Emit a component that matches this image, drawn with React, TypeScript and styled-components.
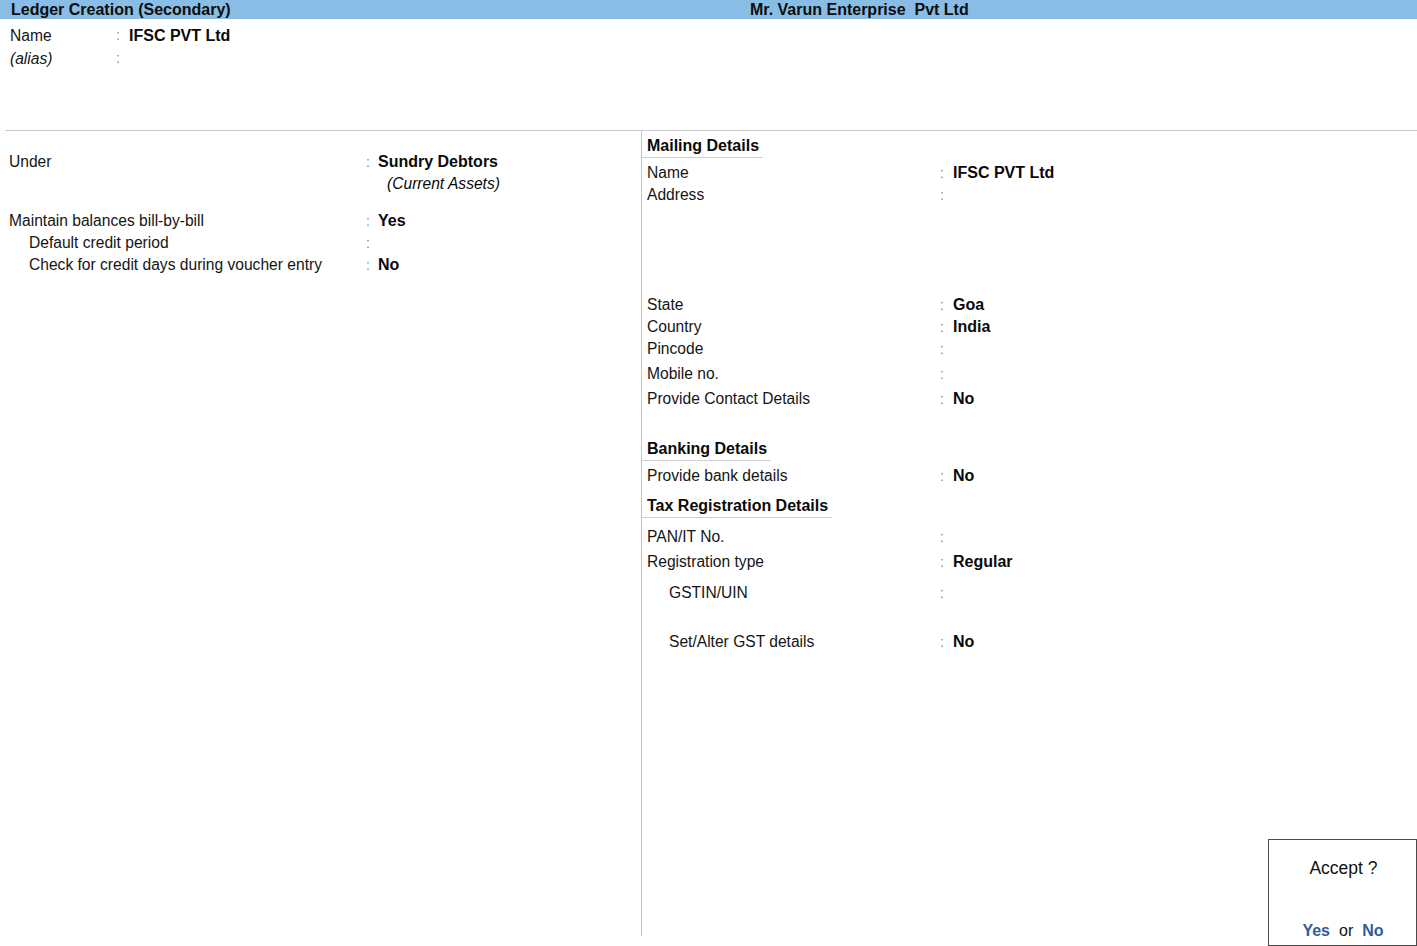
import React from "react";
import styled, { createGlobalStyle } from "styled-components";

const GlobalStyle = createGlobalStyle`
  html, body { margin: 0; padding: 0; background: #ffffff; }
  body { font-family: "Liberation Sans", Arial, sans-serif; color: #111; }
  * { box-sizing: border-box; }
`;

const Page = styled.div`
  position: relative;
  width: 1417px;
  height: 946px;
  overflow: hidden;
  display: flex;
  flex-direction: column;
  background: #fff;
`;

const HeaderBar = styled.div`
  height: 19px;
  background: #89bde5;
  display: grid;
  grid-template-columns: 750px 1fr;
  font-weight: bold;
  font-size: 16px;
  line-height: 19px;
  color: #0d0d0d;
`;

const HeaderTitle = styled.div`
  padding-left: 11px;
`;

const Company = styled.div`
  white-space: pre;
`;

const TopSection = styled.div`
  height: 112px;
  padding-top: 5px;
  border-bottom: 1px solid #c9c9c9;
  margin-left: 5px;
`;

const Body = styled.div`
  display: grid;
  grid-template-columns: 641px 1px 1fr;
  height: 805px;
`;

const Divider = styled.div`
  background: #c4c4c4;
`;

const LeftCol = styled.div`
  padding-top: 20px;
`;

const RightCol = styled.div`
  padding-top: 3px;
  display: flex;
  flex-direction: column;
  align-items: flex-start;
`;

const Row = styled.div<{ $label: number; $colon: number; $h?: number; $mt?: number; $pl: number }>`
  display: grid;
  grid-template-columns: ${(p) => p.$label}px ${(p) => p.$colon}px auto;
  height: ${(p) => p.$h ?? 22}px;
  line-height: ${(p) => p.$h ?? 22}px;
  margin-top: ${(p) => p.$mt ?? 0}px;
  padding-left: ${(p) => p.$pl}px;
  font-size: 15.6px;
  white-space: nowrap;
  align-self: stretch;
`;

const Label = styled.div<{ $indent?: number; $italic?: boolean }>`
  padding-left: ${(p) => p.$indent ?? 0}px;
  font-style: ${(p) => (p.$italic ? "italic" : "normal")};
  color: #151515;
`;

const Colon = styled.div`
  color: #8c8c8c;
  font-size: 14px;
`;

const Value = styled.div<{ $italic?: boolean; $indent?: number }>`
  font-weight: ${(p) => (p.$italic ? "normal" : "bold")};
  font-style: ${(p) => (p.$italic ? "italic" : "normal")};
  font-size: ${(p) => (p.$italic ? "15.6px" : "16px")};
  padding-left: ${(p) => p.$indent ?? 0}px;
  color: #0a0a0a;
`;

const Heading = styled.div<{ $mt: number }>`
  margin-top: ${(p) => p.$mt}px;
  height: 24px;
  line-height: 23px;
  padding: 0 4px 0 5px;
  border-bottom: 1px solid #cfcfcf;
  font-weight: bold;
  font-size: 16px;
  color: #0a0a0a;
`;

const Spacer = styled.div<{ $h: number }>`
  height: ${(p) => p.$h}px;
`;

const AcceptBox = styled.div`
  position: absolute;
  left: 1268px;
  top: 839px;
  width: 149px;
  height: 107px;
  border: 1px solid #4a4a4a;
  background: #fff;
  display: flex;
  flex-direction: column;
  align-items: center;
  justify-content: space-between;
  padding: 17px 0 3px;
  font-size: 16px;
  color: #111;
`;

const AcceptText = styled.div`
  line-height: 22px;
  font-size: 17.5px;
  padding-left: 2px;
`;

const Choices = styled.div`
  line-height: 22px;
  display: flex;
  gap: 9px;
  padding-left: 1px;
`;

const Choice = styled.span`
  font-weight: bold;
  color: #2f5c9c;
`;

type Field = {
  label: string;
  value?: string;
  indent?: number;
  h?: number;
  mt?: number;
};

const LeftRow: React.FC<Field & { italicValue?: boolean; noColon?: boolean }> = ({
  label,
  value,
  indent,
  h,
  mt,
  italicValue,
  noColon,
}) => (
  <Row $label={357} $colon={12} $h={h} $mt={mt} $pl={9}>
    <Label $indent={indent}>{label}</Label>
    <Colon>{noColon ? "" : ":"}</Colon>
    <Value $italic={italicValue} $indent={italicValue ? 9 : 0}>
      {value}
    </Value>
  </Row>
);

const RightRow: React.FC<Field> = ({ label, value, indent, h, mt }) => (
  <Row $label={293} $colon={13} $h={h} $mt={mt} $pl={5}>
    <Label $indent={indent}>{label}</Label>
    <Colon>:</Colon>
    <Value>{value}</Value>
  </Row>
);

export default function App() {
  return (
    <>
      <GlobalStyle />
      <Page>
        <HeaderBar>
          <HeaderTitle>Ledger Creation (Secondary)</HeaderTitle>
          <Company>{"Mr. Varun Enterprise  Pvt Ltd"}</Company>
        </HeaderBar>
        <TopSection>
          <Row $label={106} $colon={13} $h={23} $pl={5}>
            <Label>Name</Label>
            <Colon>:</Colon>
            <Value>IFSC PVT Ltd</Value>
          </Row>
          <Row $label={106} $colon={13} $h={23} $pl={5}>
            <Label $italic>(alias)</Label>
            <Colon>:</Colon>
            <Value />
          </Row>
        </TopSection>
        <Body>
          <LeftCol>
            <LeftRow label="Under" value="Sundry Debtors" />
            <LeftRow label="" value="(Current Assets)" italicValue noColon />
            <LeftRow label="Maintain balances bill-by-bill" value="Yes" mt={15} />
            <LeftRow label="Default credit period" indent={20} />
            <LeftRow label="Check for credit days during voucher entry" value="No" indent={20} />
          </LeftCol>
          <Divider />
          <RightCol>
            <Heading $mt={0}>Mailing Details</Heading>
            <RightRow label="Name" value="IFSC PVT Ltd" mt={4} />
            <RightRow label="Address" />
            <Spacer $h={88} />
            <RightRow label="State" value="Goa" />
            <RightRow label="Country" value="India" />
            <RightRow label="Pincode" />
            <RightRow label="Mobile no." mt={3} />
            <RightRow label="Provide Contact Details" value="No" mt={3} />
            <Heading $mt={27}>Banking Details</Heading>
            <RightRow label="Provide bank details" value="No" mt={4} />
            <Heading $mt={7}>Tax Registration Details</Heading>
            <RightRow label="PAN/IT No." mt={8} />
            <RightRow label="Registration type" value="Regular" mt={3} />
            <RightRow label="GSTIN/UIN" indent={22} mt={9} />
            <RightRow label="Set/Alter GST details" value="No" indent={22} mt={27} />
          </RightCol>
        </Body>
        <AcceptBox>
          <AcceptText>Accept ?</AcceptText>
          <Choices>
            <Choice>Yes</Choice>
            <span>or</span>
            <Choice>No</Choice>
          </Choices>
        </AcceptBox>
      </Page>
    </>
  );
}
